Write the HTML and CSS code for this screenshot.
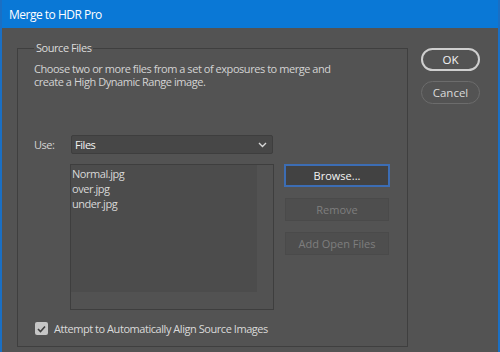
FILE: index.html
```html
<!DOCTYPE html>
<html lang="en">
<head>
  <meta charset="UTF-8" />
  <title>Merge to HDR Pro</title>
  <link rel="stylesheet" href="styles.css">
</head>
<body>
  <div class="dialog">
    <div class="title-bar">Merge to HDR Pro</div>
    <div class="dialog-body">
      <fieldset class="group">
        <legend>Source Files</legend>
        <p class="intro">Choose two or more files from a set of exposures to merge and<br>create a High Dynamic Range image.</p>
        <div class="use-row">
          <span class="use-label">Use:</span>
          <div class="select">
            <span>Files</span>
            <svg width="9" height="6" viewBox="0 0 9 6"><path d="M1 1 L4.5 4.5 L8 1" fill="none" stroke="#d8d8d8" stroke-width="1.4"/></svg>
          </div>
        </div>
        <div class="files-row">
          <div class="file-list">
            <div class="list-items">
              <div>Normal.jpg</div>
              <div>over.jpg</div>
              <div>under.jpg</div>
            </div>
            <div class="vscroll"></div>
            <div class="hscroll"></div>
          </div>
          <div class="list-buttons">
            <button class="btn btn-focus">Browse...</button>
            <button class="btn" disabled>Remove</button>
            <button class="btn" disabled>Add Open Files</button>
          </div>
        </div>
        <label class="check-row">
          <span class="checkbox">
            <svg width="9" height="8" viewBox="0 0 9 8"><path d="M1 4 L3.5 6.5 L8 1.5" fill="none" stroke="#3e3e3e" stroke-width="1.6"/></svg>
          </span>
          Attempt to Automatically Align Source Images
        </label>
      </fieldset>
      <div class="side-buttons">
        <button class="pill pill-default">OK</button>
        <button class="pill">Cancel</button>
      </div>
    </div>
  </div>
</body>
</html>
```

FILE: styles.css
```css
body {
  margin: 0;
  background: #535353;
  font-family: 'Open Sans', 'Noto Sans', sans-serif;
  font-size: 11px;
  letter-spacing: -0.45px;
  color: #d4d4d4;
}
.dialog {
  width: 500px;
  height: 352px;
  box-sizing: border-box;
  border-left: 2px solid #1a6fc4;
  border-right: 2px solid #1a6fc4;
  background: #535353;
  overflow: hidden;
}
.title-bar {
  height: 28px;
  margin: 0 -2px;
  padding-left: 9px;
  background: #0a78d6;
  color: #fff;
  font-size: 12px;
  letter-spacing: -0.5px;
  line-height: 30px;
}
.dialog-body {
  display: flex;
  align-items: flex-start;
}
.group {
  margin: 12px 0 0 15px;
  padding: 0 0 0 16px;
  width: 391px;
  height: 307px;
  box-sizing: border-box;
  border: 1px solid #3f3f3f;
  display: flex;
  flex-direction: column;
}
.group legend {
  padding: 0 2px;
  font-size: 11px;
  line-height: 16px;
  color: #dcdcdc;
}
.intro {
  margin: 6px 0 0;
  line-height: 13px;
}
.use-row {
  display: flex;
  align-items: center;
  margin-top: 47px;
}
.use-label {
  width: 37px;
}
.select {
  width: 202px;
  height: 19px;
  box-sizing: border-box;
  padding: 0 5px 0 3px;
  background: #474747;
  border: 1px solid #3e3e3e;
  border-radius: 2px;
  display: flex;
  align-items: center;
  justify-content: space-between;
  color: #f2f2f2;
}
.files-row {
  display: flex;
  margin-top: 10px;
}
.file-list {
  margin-left: 36px;
  width: 204px;
  height: 146px;
  box-sizing: border-box;
  border: 1px solid #3e3e3e;
  background: #515151;
  display: grid;
  grid-template-columns: 186px 16px;
  grid-template-rows: 127px 17px;
}
.list-items {
  background: #4c4c4c;
  padding: 1px 0 0 1px;
  line-height: 15px;
  color: #d8d8d8;
}
.vscroll,
.hscroll {
  background: #525252;
}
.hscroll {
  grid-column: 1 / 3;
}
.list-buttons {
  margin-left: 10px;
  display: flex;
  flex-direction: column;
  gap: 11px;
}
.btn {
  height: 23px;
  border: 1px solid #4a4a4a;
  background: #4e4e4e;
  font: inherit;
  color: #7e7e7e;
  padding: 0;
  margin-left: 1px;
  width: 104px;
}
.btn-focus {
  margin-left: 0;
  width: 106px;
  border: 2px solid #3c6db4;
  background: #424242;
  color: #f4f4f4;
}
.check-row {
  display: flex;
  align-items: center;
  gap: 6px;
  margin: auto 0 10px 1px;
  color: #dadada;
}
.checkbox {
  width: 13px;
  height: 13px;
  border-radius: 2px;
  background: #c6c6c6;
  display: flex;
  align-items: center;
  justify-content: center;
}
.side-buttons {
  margin: 20px 0 0 13px;
  display: flex;
  flex-direction: column;
  gap: 10px;
}
.pill {
  width: 59px;
  height: 23px;
  border-radius: 12px;
  border: 1px solid #6c6c6c;
  background: #535353;
  font: inherit;
  font-size: 11.5px;
  color: #dadada;
  padding: 0;
}
.pill-default {
  border: 2px solid #cfcfcf;
  color: #f4f4f4;
}
```
